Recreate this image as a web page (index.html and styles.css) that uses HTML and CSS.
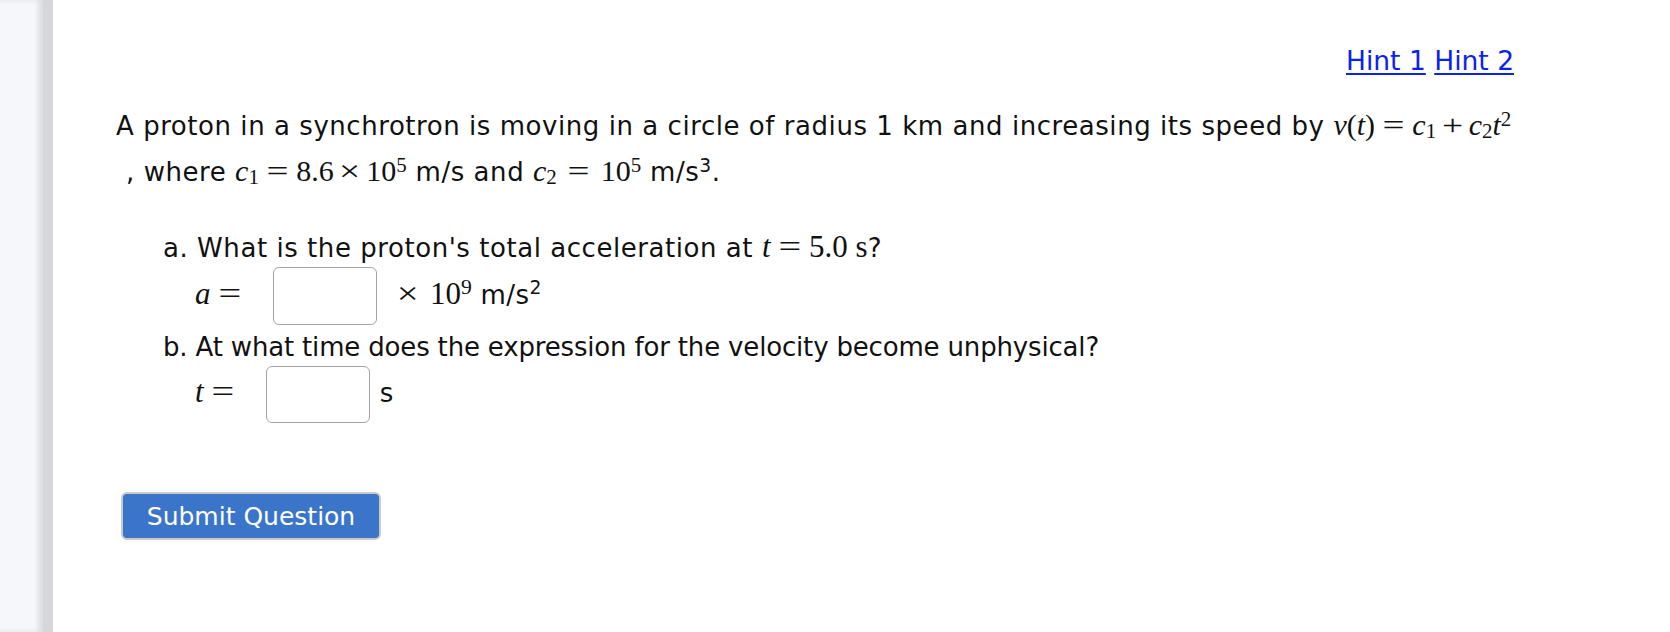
FILE: index.html
```html
<!DOCTYPE html>
<html lang="en">
<head>
<meta charset="utf-8">
<title>Question</title>
<link rel="stylesheet" href="styles.css">
</head>
<body>
<div class="page">
  <aside class="rail"></aside>
  <main class="content">
    <div class="hints"><a href="#">Hint 1</a> <a href="#">Hint 2</a></div>
    <p class="stem"><span class="stem-line">A proton in a synchrotron is moving in a circle of radius 1 km and increasing its speed by <span class="math"><i>v</i>(<i>t</i>)<span class="rel">=</span><i>c</i><sub>1</sub><span class="bin">+</span><i>c</i><sub>2</sub><i>t</i><sup>2</sup></span></span><br><span class="lead">, where </span><span class="math"><i>c</i><sub>1</sub><span class="rel">=</span>8.6<span class="bin">×</span>10<sup>5</sup></span> m/s and <span class="math"><i>c</i><sub>2</sub><span class="rel rel-wide">=</span>10<sup>5</sup></span> m/s<sup class="tsup">3</sup>.</p>
    <ol class="parts">
      <li class="part">
        <div class="prompt prompt-a">a. What is the proton's total acceleration at <span class="math"><i>t</i><span class="rel">=</span>5.0 s</span>?</div>
        <div class="answer"><span class="math"><i>a</i><span class="rel rel-gap">=</span></span><input class="field" type="text"><span class="math"><span class="binl">×</span>10<sup>9</sup></span> m/s<sup class="tsup">2</sup></div>
      </li>
      <li class="part">
        <div class="prompt prompt-b">b. At what time does the expression for the velocity become unphysical?</div>
        <div class="answer"><span class="math"><i>t</i><span class="rel rel-gap">=</span></span><input class="field field-b" type="text"><span class="unit">s</span></div>
      </li>
    </ol>
    <button class="submit" type="button">Submit Question</button>
  </main>
</div>
</body>
</html>
```

FILE: styles.css
```css
html, body {
  margin: 0;
  padding: 0;
  background: #ffffff;
}
body {
  font-family: "DejaVu Sans", Verdana, sans-serif;
  font-size: 26px;
  color: #111111;
}
.page {
  display: flex;
  min-height: 632px;
}
.rail {
  width: 43px;
  flex: none;
  background: #f5f7fb;
  border-right: 10px solid #d6d7da;
  box-shadow: inset -5px 0 5px rgba(0,0,0,0.10);
}
.content {
  flex: 1;
  padding: 46px 80px 0 63px;
}
.hints {
  text-align: right;
  line-height: 30px;
  margin-right: 76px;
  font-size: 26.5px;
}
.hints a {
  color: #0a22f0;
  text-decoration: underline;
  text-underline-offset: 3px;
}
.stem {
  margin: 27px 0 0 0;
  line-height: 46px;
  letter-spacing: 0.55px;
}
.stem-line {
  white-space: nowrap;
}
.lead {
  padding-left: 10px;
}
.math {
  font-family: "Liberation Serif", "Times New Roman", serif;
  font-size: 30px;
  line-height: 0;
  white-space: nowrap;
  letter-spacing: 0;
}
.prompt .math,
.answer .math {
  font-size: 31px;
}
.math i {
  font-style: italic;
}
.math sub {
  font-size: 0.7em;
  line-height: 0;
  vertical-align: -0.15em;
}
.math sup {
  font-size: 0.7em;
  line-height: 0;
  vertical-align: 0.45em;
}
.rel {
  display: inline-block;
  transform: scaleX(1.3);
  margin: 0 0.34em;
}
.rel-wide {
  margin: 0 0.45em;
}
.rel-gap {
  margin-right: 1.1em;
}
.bin {
  display: inline-block;
  transform: scaleX(1.25);
  margin: 0 0.26em;
}
.binl {
  display: inline-block;
  transform: scaleX(1.25);
  margin: 0 0.45em 0 0;
}
.tsup {
  font-size: 0.72em;
  line-height: 0;
  vertical-align: 0.5em;
}
.parts {
  list-style: none;
  margin: 34px 0 0 0;
  padding: 0 0 0 47px;
}
.part + .part {
  margin-top: 3px;
}
.prompt {
  line-height: 38px;
}
.prompt-a {
  letter-spacing: 0.55px;
}
.prompt-b {
  letter-spacing: -0.17px;
}
.prompt .math {
  letter-spacing: 0;
}
.answer {
  line-height: 1;
  padding-left: 32px;
  letter-spacing: 0.4px;
}
.field {
  display: inline-block;
  vertical-align: middle;
  box-sizing: border-box;
  width: 104px;
  height: 58px;
  margin: 0 22px 0 0;
  border: 1.5px solid #a3a3a3;
  border-radius: 6px;
  background: #ffffff;
  padding: 0;
}
.field-b {
  height: 57px;
  margin-right: 10px;
}
.unit {
  font-size: 26px;
}
.submit {
  display: block;
  margin: 69px 0 0 5px;
  width: 260px;
  height: 48px;
  box-sizing: border-box;
  background: #3b75c9;
  color: #ffffff;
  border: 2px solid #c9c9c9;
  border-radius: 6px;
  font-family: "DejaVu Sans", Verdana, sans-serif;
  font-size: 25px;
  padding: 0;
}
```
